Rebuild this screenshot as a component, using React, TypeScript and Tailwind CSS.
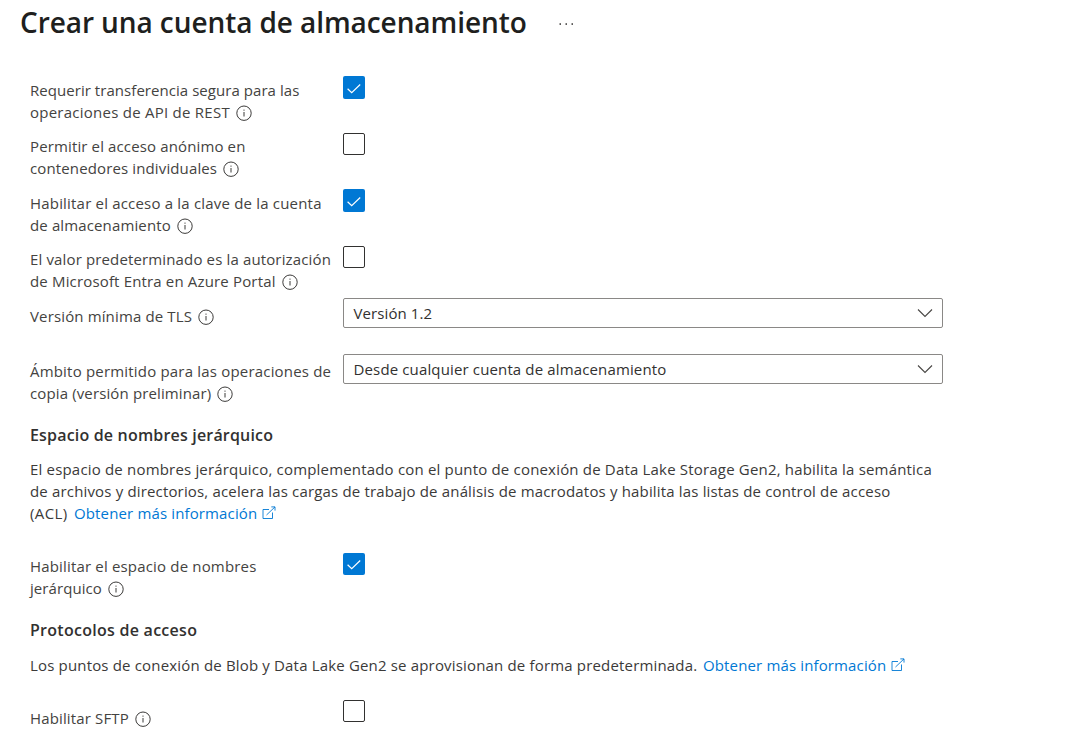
import React from 'react';

function InfoIcon() {
  return (
    <svg className="ml-[6px] mt-[4px] h-4 w-4 shrink-0" viewBox="0 0 16 16" fill="none">
      <circle cx="8" cy="8.2" r="7.2" stroke="#3b3a39" strokeWidth="1" />
      <path d="M8 7v4.500" stroke="#3b3a39" strokeWidth="1" />
      <circle cx="8" cy="5.100" r="0.7" fill="#3b3a39" />
    </svg>
  );
}

function ExternalIcon() {
  return (
    <svg className="ml-[5px] mt-[4px] h-[14px] w-[14px] shrink-0" viewBox="0 0 14 14" fill="none" stroke="#0078d4" strokeWidth="0.9">
      <path d="M7 3.500H1v9h9.500V6.500M4.500 9L13 .9M9.300 .9H13V4.600" />
    </svg>
  );
}

function Checkbox({ checked = false, tall = false }: { checked?: boolean; tall?: boolean }) {
  return checked ? (
    <span role="checkbox" aria-checked="true" className={`flex w-[22px] shrink-0 items-center justify-center rounded-[2px] bg-[#0078d4] ${tall ? 'h-[23px]' : 'h-[22px]'}`}>
      <svg className="h-[22px] w-[22px]" viewBox="0 0 22 22" fill="none" stroke="#fff" strokeWidth="1.2">
        <path d="M4.600 11.700L8.700 15.700L17.200 7.500" />
      </svg>
    </span>
  ) : (
    <span role="checkbox" aria-checked="false" className="h-[22px] w-[22px] shrink-0 rounded-[2px] border border-[#323130] bg-white" />
  );
}

type Line = { text: string; tracking: string };

function Label({ lines, className = '' }: { lines: Line[]; className?: string }) {
  return (
    <div className={`w-[313px] shrink-0 ${className}`}>
      {lines.map((line, i) => (
        <div key={line.text} className="flex h-[22px] whitespace-nowrap leading-[22px]">
          <span className={line.tracking}>{line.text}</span>
          {i === lines.length - 1 && <InfoIcon />}
        </div>
      ))}
    </div>
  );
}

function Select({ value, tracking }: { value: string; tracking: string }) {
  return (
    <div className="flex h-[30px] w-[600px] items-center justify-between rounded-[2px] border border-[#8a8886] pl-[9.5px] pr-[9px]">
      <span className={`whitespace-nowrap text-[#323130] ${tracking}`}>{value}</span>
      <svg className="h-4 w-4" viewBox="0 0 16 16" fill="none" stroke="#484644" strokeWidth="1.100">
        <path d="M1 4.500L8 11.500L15 4.500" />
      </svg>
    </div>
  );
}

export default function App() {
  return (
    <main className="h-[745px] w-[1086px] overflow-hidden bg-white font-['Open_Sans','Noto_Sans',sans-serif] text-[15px] text-[#444341]">
      <header className="flex h-[76px] items-start pl-5 pt-[4px]">
        <h1 className="w-[538px] whitespace-nowrap text-[28px] font-semibold leading-[36px] tracking-[-0.08px] text-[#201f1e]">
          Crear una cuenta de almacenamiento
        </h1>
        <svg className="mt-[17px] h-[6px] w-[15px]" viewBox="0 0 15 6" fill="#323130">
          <rect x="1.500" y="2.300" width="1.500" height="1.500" />
          <rect x="7.500" y="2.300" width="1.500" height="1.500" />
          <rect x="13.500" y="2.300" width="1.500" height="1.500" />
        </svg>
      </header>
      <div className="flex flex-col pl-[30px]">
        <div className="flex h-[57px] items-start">
          <Label className="pt-[3px]" lines={[{ text: 'Requerir transferencia segura para las', tracking: 'tracking-[0.05px]' }, { text: 'operaciones de API de REST', tracking: 'tracking-[0.25px]' }]} />
          <Checkbox checked tall />
        </div>
        <div className="flex h-[56px] items-start">
          <Label className="pt-[2px]" lines={[{ text: 'Permitir el acceso anónimo en', tracking: 'tracking-[0.13px]' }, { text: 'contenedores individuales', tracking: 'tracking-[0.13px]' }]} />
          <Checkbox />
        </div>
        <div className="flex h-[57px] items-start">
          <Label className="pt-[3px]" lines={[{ text: 'Habilitar el acceso a la clave de la cuenta', tracking: 'tracking-[0.19px]' }, { text: 'de almacenamiento', tracking: 'tracking-[0.13px]' }]} />
          <Checkbox checked tall />
        </div>
        <div className="flex h-[52px] items-start">
          <Label className="pt-[2px]" lines={[{ text: 'El valor predeterminado es la autorización', tracking: 'tracking-[0.14px]' }, { text: 'de Microsoft Entra en Azure Portal', tracking: 'tracking-[0.16px]' }]} />
          <Checkbox />
        </div>
        <div className="flex h-[56px] items-start">
          <Label className="pt-[7px]" lines={[{ text: 'Versión mínima de TLS', tracking: 'tracking-[0.14px]' }]} />
          <Select value="Versión 1.2" tracking="tracking-[0.1px]" />
        </div>
        <div className="flex h-[70px] items-start">
          <Label className="pt-[6px]" lines={[{ text: 'Ámbito permitido para las operaciones de', tracking: 'tracking-[0.19px]' }, { text: 'copia (versión preliminar)', tracking: 'tracking-[0.13px]' }]} />
          <Select value="Desde cualquier cuenta de almacenamiento" tracking="tracking-[0.14px]" />
        </div>
        <h2 className="h-[34px] whitespace-nowrap text-[16px] font-semibold leading-[22px] tracking-[0.18px] text-[#323130]">Espacio de nombres jerárquico</h2>
        <div className="h-[95px] whitespace-nowrap leading-[22px] text-[#3b3a39]">
          <p className="tracking-[0.183px]">El espacio de nombres jerárquico, complementado con el punto de conexión de Data Lake Storage Gen2, habilita la semántica</p>
          <p className="tracking-[0.164px]">de archivos y directorios, acelera las cargas de trabajo de análisis de macrodatos y habilita las listas de control de acceso</p>
          <p className="flex"><span className="w-[44px] tracking-[0.4px]">(ACL)</span><a className="flex text-[#0078d4]"><span className="tracking-[0.14px]">Obtener más información</span><ExternalIcon /></a></p>
        </div>
        <div className="flex h-[66px] items-start">
          <Label className="pt-[2px]" lines={[{ text: 'Habilitar el espacio de nombres', tracking: 'tracking-[0.17px]' }, { text: 'jerárquico', tracking: 'tracking-[0.08px]' }]} />
          <Checkbox checked />
        </div>
        <h2 className="h-[35px] whitespace-nowrap text-[16px] font-semibold leading-[22px] tracking-[0.27px] text-[#323130]">Protocolos de acceso</h2>
        <p className="flex h-[46px] whitespace-nowrap leading-[22px] text-[#3b3a39]"><span className="w-[673px] tracking-[0.17px]">Los puntos de conexión de Blob y Data Lake Gen2 se aprovisionan de forma predeterminada.</span><a className="flex text-[#0078d4]"><span className="tracking-[0.14px]">Obtener más información</span><ExternalIcon /></a></p>
        <div className="flex items-start">
          <Label className="pt-[7px]" lines={[{ text: 'Habilitar SFTP', tracking: 'tracking-[0.14px]' }]} />
          <Checkbox />
        </div>
      </div>
    </main>
  );
}
